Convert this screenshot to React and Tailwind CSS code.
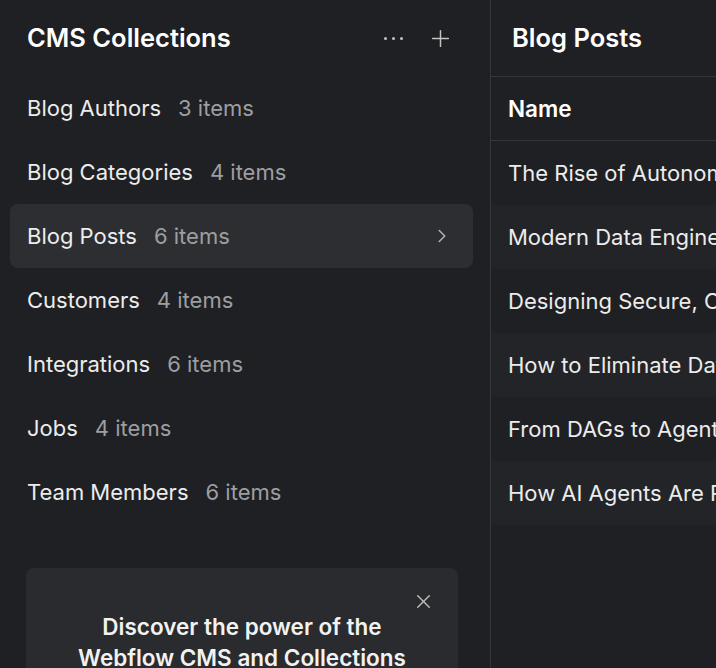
import { X, ChevronRight, Plus } from "lucide-react";

const collections = [
  { name: "Blog Authors", count: "3 items" },
  { name: "Blog Categories", count: "4 items" },
  { name: "Blog Posts", count: "6 items", active: true },
  { name: "Customers", count: "4 items" },
  { name: "Integrations", count: "6 items" },
  { name: "Jobs", count: "4 items" },
  { name: "Team Members", count: "6 items" },
];

const posts = [
  "The Rise of Autonomous Data Agents",
  "Modern Data Engineering Patterns",
  "Designing Secure, Compliant Pipelines",
  "How to Eliminate Data Silos",
  "From DAGs to Agents",
  "How AI Agents Are Reshaping Analytics",
];

const App = () => {
  return (
    <div
      className="w-[716px] h-[668px] overflow-hidden bg-[#1f2023] flex text-[#ececec]"
      style={{ fontFamily: "Inter, 'Noto Sans', sans-serif" }}
    >
      {/* LEFT PANEL */}
      <div className="w-[491px] shrink-0 h-full border-r border-[#35363a] flex flex-col">
        <div className="h-[76px] shrink-0 flex items-center justify-between pl-[27px] pr-[36px]">
          <h1 className="text-[25.5px] font-semibold text-white">CMS Collections</h1>
          <div className="flex items-center gap-[24px] text-[#c4c4c4]">
            <div className="flex items-center gap-[5px]">
              <span className="w-[3px] h-[3px] rounded-full bg-[#c4c4c4]"></span>
              <span className="w-[3px] h-[3px] rounded-full bg-[#c4c4c4]"></span>
              <span className="w-[3px] h-[3px] rounded-full bg-[#c4c4c4]"></span>
            </div>
            <Plus size={27} strokeWidth={1.3} />
          </div>
        </div>

        <div className="flex flex-col pl-[10px] pr-[17px]">
          {collections.map((c) => (
            <div
              key={c.name}
              className={`h-[64px] flex items-center justify-between pl-[17px] pr-[20px] rounded-[8px] ${
                c.active ? "bg-[#2d2e31]" : ""
              }`}
            >
              <div className="flex items-center gap-[17px] text-[22px]">
                <span className="text-[#ececec]">{c.name}</span>
                <span className="text-[#9d9ea1]">{c.count}</span>
              </div>
              {c.active && <ChevronRight size={22} strokeWidth={1.6} className="text-[#b5b5b5]" />}
            </div>
          ))}
        </div>

        {/* PROMO CARD */}
        <div className="mx-[26px] mt-[44px] w-[432px] rounded-[8px] bg-[#2a2b2e] pt-[22px] px-[20px] pb-[20px] flex flex-col items-center">
          <div className="w-full flex justify-end pr-[3px]">
            <X size={23} strokeWidth={1.5} className="text-[#bdbdbd]" />
          </div>
          <p className="text-[22.5px] font-semibold text-center leading-[31px] text-[#f2f2f2] mt-[-2px] whitespace-nowrap">
            Discover the power of the
            <br />
            Webflow CMS and Collections
          </p>
        </div>
      </div>

      {/* RIGHT PANEL */}
      <div className="flex-1 min-w-0 h-full flex flex-col overflow-hidden">
        <div className="h-[77px] shrink-0 flex items-center pl-[21px] border-b border-[#35363a]">
          <h2 className="text-[25.5px] font-semibold text-white whitespace-nowrap">Blog Posts</h2>
        </div>
        <div className="h-[64px] shrink-0 flex items-center pl-[17px] border-b border-[#35363a]">
          <span className="text-[22.5px] font-semibold text-white">Name</span>
        </div>
        {posts.map((p, i) => (
          <div
            key={p}
            className={`h-[64px] shrink-0 flex items-center pl-[17px] whitespace-nowrap ${
              i % 2 === 1 ? "bg-[#232427]" : ""
            }`}
          >
            <span className="text-[22px] text-[#ececec]">{p}</span>
          </div>
        ))}
      </div>
    </div>
  );
};

export default App;
